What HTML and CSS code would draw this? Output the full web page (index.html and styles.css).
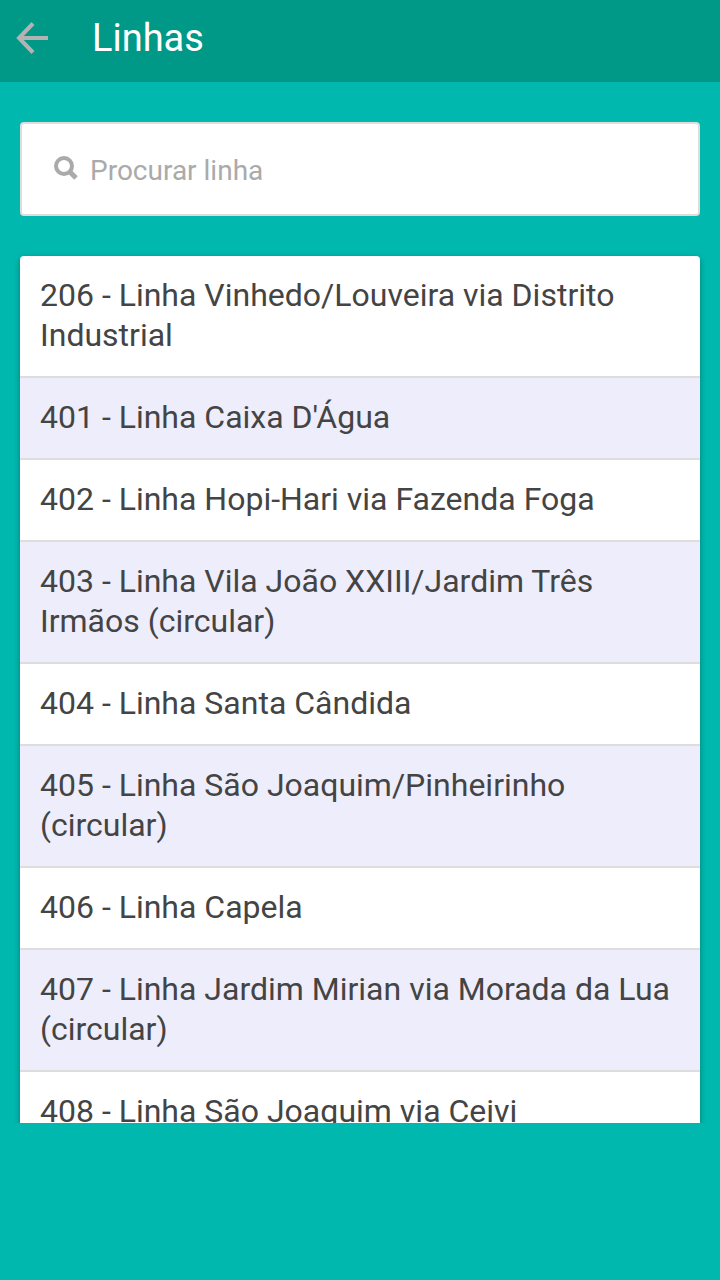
FILE: index.html
```html
<!DOCTYPE html>
<html lang="pt-BR">
<head>
  <meta charset="UTF-8" />
  <meta name="viewport" content="width=device-width, initial-scale=1.0" />
  <title>Linhas</title>
  <link rel="stylesheet" href="styles.css">
</head>
<body>
  <header class="bar">
    <button class="back" type="button" aria-label="Voltar">
      <svg width="32" height="32" viewBox="0 0 32 32" fill="none" stroke="#b3b3b3" stroke-width="4">
        <path d="M32 16H3M17 1.5L3 16L17 30.5" />
      </svg>
    </button>
    <h1 class="title">Linhas</h1>
  </header>

  <main class="content">
    <label class="search">
      <svg class="search-icon" width="24" height="24" viewBox="0 0 24 24" fill="none" stroke="#aaa">
        <circle cx="10" cy="10" r="8" stroke-width="4" />
        <path d="M15.5 15.5L22 22" stroke-width="5" />
      </svg>
      <input class="search-input" type="text" placeholder="Procurar linha" aria-label="Procurar linha" />
    </label>

    <ul class="list">
      <li><a class="item" href="#206">206 - Linha Vinhedo/Louveira via Distrito Industrial</a></li>
      <li><a class="item" href="#401">401 - Linha Caixa D'Água</a></li>
      <li><a class="item" href="#402">402 - Linha Hopi-Hari via Fazenda Foga</a></li>
      <li><a class="item" href="#403">403 - Linha Vila João XXIII/Jardim Três Irmãos (circular)</a></li>
      <li><a class="item" href="#404">404 - Linha Santa Cândida</a></li>
      <li><a class="item" href="#405">405 - Linha São Joaquim/Pinheirinho (circular)</a></li>
      <li><a class="item" href="#406">406 - Linha Capela</a></li>
      <li><a class="item" href="#407">407 - Linha Jardim Mirian via Morada da Lua (circular)</a></li>
      <li><a class="item" href="#408">408 - Linha São Joaquim via Ceivi</a></li>
    </ul>
  </main>

  <footer class="banner"></footer>
</body>
</html>
```
FILE: styles.css
```css
* {
  box-sizing: border-box;
}
body {
  font-family: Roboto, "Noto Sans", sans-serif;
  background: #00b8ae;
  color: #444;
  margin: 0;
  height: 100vh;
  display: flex;
  flex-direction: column;
}
.bar {
  background: #009988;
  flex: none;
  display: flex;
  align-items: center;
  gap: 44px;
  padding: 14px 16px 20px;
}
.back {
  background: none;
  border: none;
  padding: 0;
  display: flex;
  cursor: pointer;
}
.back svg {
  display: block;
}
.title {
  margin: 0;
  color: #fff;
  font-size: 38px;
  line-height: 48px;
  font-weight: 400;
}
.content {
  flex: 1;
  min-height: 0;
  overflow: hidden;
  padding: 40px 20px 0;
}
.search {
  background: #fff;
  border: 2px solid #ddd;
  border-radius: 4px;
  display: flex;
  align-items: center;
  gap: 12px;
  padding: 19px 32px 21px;
}
.search-icon {
  flex: none;
}
.search-input {
  flex: 1;
  min-width: 0;
  border: none;
  outline: none;
  padding: 4px 0 0;
  height: 50px;
  background: transparent;
  font-family: inherit;
  font-size: 28px;
  color: #444;
}
.search-input::placeholder {
  color: #aaa;
}
.list {
  list-style: none;
  margin: 40px 0;
  padding: 0;
  background: #fff;
  border-radius: 4px;
  box-shadow: 0 2px 6px rgba(0, 0, 0, 0.3);
  overflow: hidden;
}
.item {
  display: block;
  padding: 19px 20px 21px;
  border-bottom: 2px solid #ddd;
  color: #444;
  font-size: 32px;
  line-height: 40px;
  text-decoration: none;
}
.list li:nth-child(even) .item {
  background: #eeedfb;
}
.banner {
  flex: none;
  height: 157px;
}
```
